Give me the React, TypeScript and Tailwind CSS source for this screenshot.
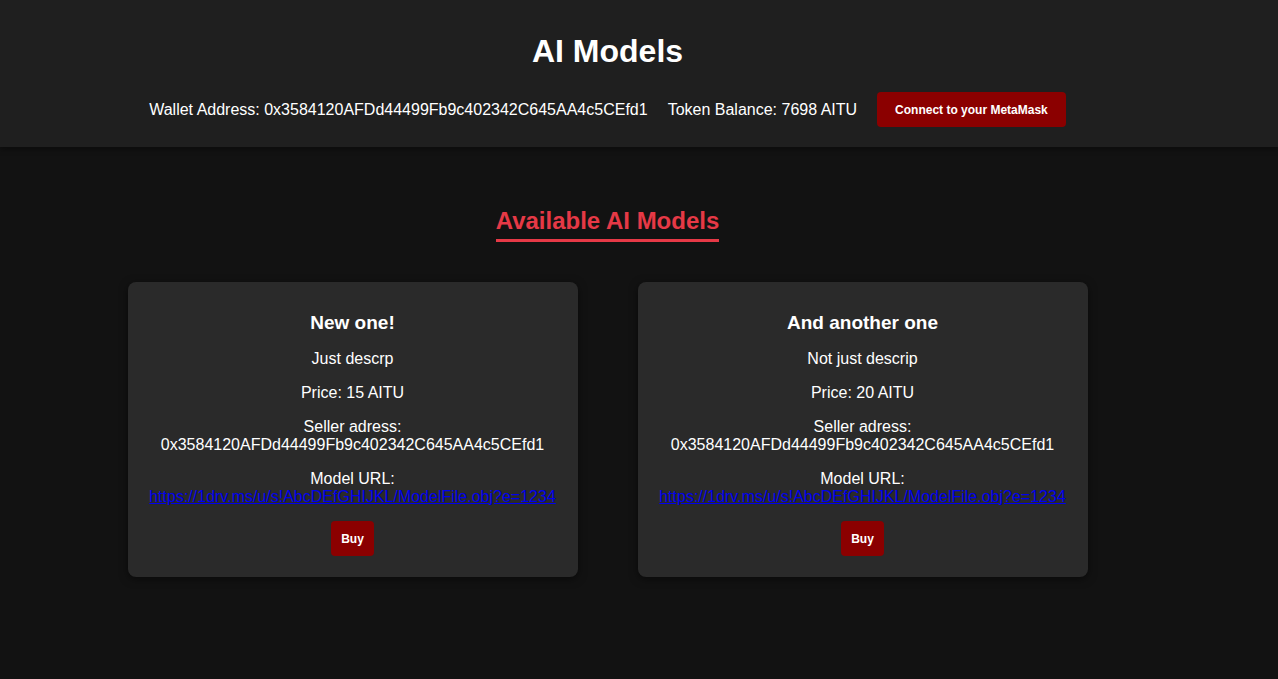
const models = [
  {
    id: 1,
    name: "New one!",
    description: "Just descrp",
    price: 15,
    seller: "0x3584120AFDd44499Fb9c402342C645AA4c5CEfd1",
    url: "https://1drv.ms/u/s!AbcDEfGHIJKL/ModelFile.obj?e=1234",
  },
  {
    id: 2,
    name: "And another one",
    description: "Not just descrip",
    price: 20,
    seller: "0x3584120AFDd44499Fb9c402342C645AA4c5CEfd1",
    url: "https://1drv.ms/u/s!AbcDEfGHIJKL/ModelFile.obj?e=1234",
  },
];

const ModelCard = ({ model }: { model: (typeof models)[number] }) => (
  <div className="w-[450px] rounded-lg bg-[#2a2a2a] pt-[30px] pb-[21px] text-center text-white shadow-[0_2px_8px_rgba(0,0,0,0.5)]">
    <h3 className="text-[19px] leading-[22px] font-bold">{model.name}</h3>
    <p className="mt-4 leading-[18px]">{model.description}</p>
    <p className="mt-4 leading-[18px]">Price: {model.price} AITU</p>
    <p className="mt-4 leading-[18px]">
      Seller adress: <br />
      {model.seller}
    </p>
    <p className="mt-4 leading-[18px]">
      Model URL: <br />
      <a href="#" className="text-[#0000ee] underline">
        {model.url}
      </a>
    </p>
    <button className="mt-[15px] h-[35px] rounded bg-[#8b0000] px-[10px] text-[12px] font-bold text-white">
      Buy
    </button>
  </div>
);

export default function App() {
  const wallet = "0x3584120AFDd44499Fb9c402342C645AA4c5CEfd1";
  const balance = 7698;

  return (
    <div
      className="min-h-screen bg-[#121212] text-white"
      style={{ fontFamily: '"Liberation Sans", Arial, sans-serif' }}
    >
      <header className="bg-[#1f1f1f] pt-[33px] pb-5 shadow-[0_2px_6px_rgba(0,0,0,0.4)]">
        <div className="w-[1215px] flex flex-col items-center">
          <h1 className="text-[32px] leading-[37px] font-bold">AI Models</h1>
          <div className="mt-[22px] flex items-center gap-5 text-base">
            <span>Wallet Address: {wallet}</span>
            <span>Token Balance: {balance} AITU</span>
            <button className="h-[35px] rounded bg-[#8b0000] px-[18px] text-[12px] font-bold text-white">
              Connect to your MetaMask
            </button>
          </div>
        </div>
      </header>

      <main className="w-[1215px] flex flex-col items-center pt-[60px] pb-10">
        <h2 className="border-b-[3px] border-[#e63946] pb-[4px] text-[24px] leading-[28px] font-bold text-[#e63946]">
          Available AI Models
        </h2>
        <div className="mt-10 flex gap-[60px]">
          {models.map((m) => (
            <ModelCard key={m.id} model={m} />
          ))}
        </div>
      </main>
    </div>
  );
}
